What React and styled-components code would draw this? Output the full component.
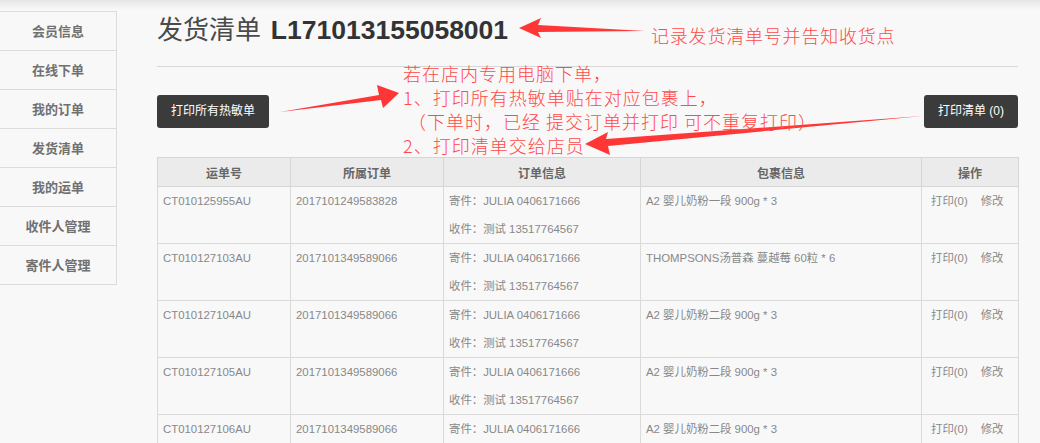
import React from 'react';
import styled, { createGlobalStyle } from 'styled-components';

const GlobalStyle = createGlobalStyle`
	html, body {
		margin: 0;
		padding: 0;
		background: #f8f8f8;
	}
	body {
		font-family: "Liberation Sans", "Noto Sans CJK SC", sans-serif;
	}
`;

const menuItems = ['会员信息', '在线下单', '我的订单', '发货清单', '我的运单', '收件人管理', '寄件人管理'];

const sender = '寄件：JULIA 0406171666';
const receiver = '收件：测试 13517764567';

const rows = [
	{ no: 'CT010125955AU', order: '2017101249583828', pkg: 'A2 婴儿奶粉一段 900g * 3' },
	{ no: 'CT010127103AU', order: '2017101349589066', pkg: 'THOMPSONS汤普森 蔓越莓 60粒 * 6' },
	{ no: 'CT010127104AU', order: '2017101349589066', pkg: 'A2 婴儿奶粉二段 900g * 3' },
	{ no: 'CT010127105AU', order: '2017101349589066', pkg: 'A2 婴儿奶粉二段 900g * 3' },
	{ no: 'CT010127106AU', order: '2017101349589066', pkg: 'A2 婴儿奶粉二段 900g * 3' },
];

const columns = [
	{ title: '运单号', width: 133 },
	{ title: '所属订单', width: 153 },
	{ title: '订单信息', width: 197 },
	{ title: '包裹信息', width: 281 },
	{ title: '操作', width: 97 },
];

const App = () => {
	return (
		<Page>
			<GlobalStyle />
			<Sidebar>
				{menuItems.map((item) => (
					<MenuItem key={item}>{item}</MenuItem>
				))}
			</Sidebar>
			<Main>
				<Title>
					发货清单 <TitleNo>L171013155058001</TitleNo>
				</Title>
				<Divider />
				<Toolbar>
					<DarkButton>打印所有热敏单</DarkButton>
					<DarkButton>打印清单 (0)</DarkButton>
				</Toolbar>
				<Table>
					<colgroup>
						{columns.map((c) => (
							<col key={c.title} style={{ width: c.width }} />
						))}
					</colgroup>
					<thead>
						<tr>
							{columns.map((c) => (
								<Th key={c.title}>{c.title}</Th>
							))}
						</tr>
					</thead>
					<tbody>
						{rows.map((r) => (
							<tr key={r.no}>
								<Td>{r.no}</Td>
								<Td>{r.order}</Td>
								<Td>
									<Line>{sender}</Line>
									<Line>{receiver}</Line>
								</Td>
								<Td>{r.pkg}</Td>
								<OpsTd>
									<Op>打印(0)</Op>
									<Op>修改</Op>
								</OpsTd>
							</tr>
						))}
					</tbody>
				</Table>
			</Main>

			<Overlay>
				<Arrows width="1040" height="443" viewBox="0 0 1040 443">
					<polygon points="519,28 541,18 538,25 645,31 538,32 541,38" />
					<polygon points="399,93 377,85 379,95 280,112 381,100 383,108" />
					<polygon points="585,144 608,132 606,139 923,116 608,146 610,155" />
				</Arrows>
				<Note top={23} left={651} spacing={0.8}>记录发货清单号并告知收货点</Note>
				<Note top={61} left={403} spacing={1}>
					<div>若在店内专用电脑下单，</div>
					<div>1、打印所有热敏单贴在对应包裹上，</div>
					<div>&nbsp;（下单时，已经 提交订单并打印 可不重复打印）</div>
					<div>2、打印清单交给店员</div>
				</Note>
			</Overlay>
		</Page>
	);
};

const Page = styled.div`
	position: relative;
	display: flex;
	gap: 40px;
	width: 1040px;
	height: 443px;
	overflow: hidden;
	background: linear-gradient(#e6e6e6 0px, #f8f8f8 10px, #f8f8f8 100%);
`;

const Sidebar = styled.div`
	flex: 0 0 116px;
	margin-top: 11px;
	margin-left: -1px;
	align-self: flex-start;
	border: 1px solid #dcdcdc;
	background: #f8f8f8;
`;

const MenuItem = styled.div`
	height: 38px;
	line-height: 38px;
	text-align: center;
	font-family: "Noto Sans CJK SC", sans-serif;
	font-size: 13px;
	font-weight: 700;
	color: #707070;
	border-top: 1px solid #dcdcdc;
	&:first-child {
		border-top: none;
	}
`;

const Main = styled.div`
	width: 861px;
	flex: 0 0 861px;
`;

const Title = styled.h1`
	margin: 10px 0 0;
	height: 36px;
	line-height: 36px;
	font-family: "Noto Sans CJK SC", serif;
	font-size: 26px;
	font-weight: 400;
	color: #4a4a4a;
	white-space: nowrap;
`;

const TitleNo = styled.span`
	margin-left: 4px;
	font-family: "Liberation Sans", sans-serif;
	font-size: 26.5px;
	font-weight: 700;
	color: #333;
`;

const Divider = styled.div`
	margin-top: 20px;
	height: 1px;
	background: #d8d8d8;
`;

const Toolbar = styled.div`
	display: flex;
	justify-content: space-between;
	margin-top: 28px;
`;

const DarkButton = styled.div`
	height: 33px;
	padding: 0 14px;
	line-height: 33px;
	border-radius: 3px;
	background: #3b3b3b;
	color: #fff;
	font-family: "Liberation Sans", "Noto Sans CJK SC", sans-serif;
	font-size: 12px;
	white-space: nowrap;
`;

const Table = styled.table`
	margin-top: 29px;
	width: 861px;
	border-collapse: collapse;
	table-layout: fixed;
	font-size: 11.4px;
	color: #888;
`;

const Th = styled.th`
	height: 28px;
	padding: 0;
	background: #ebebeb;
	border: 1px solid #d6d6d6;
	color: #666;
	font-family: "Noto Sans CJK SC", sans-serif;
	font-size: 12px;
	font-weight: 700;
	text-align: center;
`;

const Td = styled.td`
	height: 48px;
	padding: 8px 5px 0;
	vertical-align: top;
	border: 1px solid #dadada;
	line-height: 13px;
	white-space: nowrap;
	overflow: hidden;
`;

const OpsTd = styled(Td)`
	padding-left: 9px;
`;

const Line = styled.div`
	height: 13px;
	& + & {
		margin-top: 15px;
	}
`;

const Op = styled.span`
	margin-right: 13px;
	color: #888;
`;

const Overlay = styled.div`
	position: absolute;
	inset: 0;
	pointer-events: none;
`;

const Arrows = styled.svg`
	position: absolute;
	left: 0;
	top: 0;
	fill: #ff3636;
`;

const Note = styled.div`
	position: absolute;
	top: ${(p) => p.top}px;
	left: ${(p) => p.left}px;
	font-family: "Noto Sans CJK SC", sans-serif;
	font-size: 18px;
	font-weight: 300;
	line-height: 24px;
	letter-spacing: ${(p) => p.spacing}px;
	color: #ff4a4a;
	white-space: nowrap;
`;

export default App;
